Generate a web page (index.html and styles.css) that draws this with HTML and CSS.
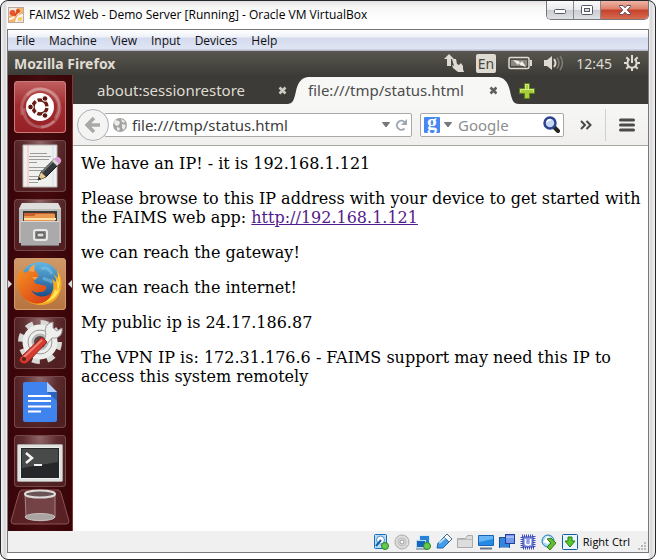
FILE: index.html
```html
<!DOCTYPE html>
<html lang="en">
<head>
<meta charset="utf-8">
<title>FAIMS2 Web - Demo Server [Running] - Oracle VM VirtualBox</title>
<link rel="stylesheet" href="styles.css">
</head>
<body>
<div class="window">
  <header class="titlebar">
    <svg class="app-icon" width="16" height="16" viewBox="0 0 16 16">
      <rect x=".5" y=".5" width="15" height="15" fill="#f3e6dc" stroke="#b9a99f"/>
      <path d="M1 9h5l2-3 1-5h6v6l-5 1-3 7H1z" fill="#f7b56c"/>
      <path d="M1 12c3 0 5-1 6-4l4-2M8 15c0-4 3-6 7-7" fill="none" stroke="#fff" stroke-width="1.5"/>
      <circle cx="4.500" cy="6" r="3" fill="#e8562a"/><circle cx="10" cy="4" r="2" fill="#d94b20"/><circle cx="12" cy="12" r="2" fill="#f7ca55"/>
      <path d="M6 9l4-4" stroke="#d94b20" stroke-width="2"/>
    </svg>
    <h1 class="title">FAIMS2 Web - Demo Server [Running] - Oracle VM VirtualBox</h1>
    <div class="caption-buttons">
      <button class="caption minimize" aria-label="Minimize"><svg width="14" height="12" viewBox="0 0 14 12"><rect x="1.500" y="5.500" width="11" height="4" rx="1" fill="#fff" stroke="#55586a"/></svg></button>
      <button class="caption maximize" aria-label="Maximize"><svg width="14" height="12" viewBox="0 0 14 12"><rect x="1.500" y="1.500" width="11" height="9" rx="1" fill="#fff" stroke="#55586a"/><rect x="4.500" y="4.500" width="5" height="3" fill="#ddd" stroke="#55586a"/></svg></button>
      <button class="caption close" aria-label="Close"><svg width="14" height="12" viewBox="0 0 14 12"><path d="M1.500 1.500h3.500l2 2.300 2-2.300h3.500v1L9.300 6l3.200 3.500v1H9L7 8.200l-2 2.300H1.500v-1L4.700 6 1.500 2.500z" fill="#fff" stroke="#5e4a58"/></svg></button>
    </div>
  </header>

  <div class="client">
    <nav class="menubar">
      <button>File</button><button>Machine</button><button>View</button><button>Input</button><button>Devices</button><button>Help</button>
    </nav>

    <div class="guest">
      <header class="panel">
        <span class="panel-title">Mozilla Firefox</span>
        <div class="indicators">
          <svg width="20" height="18" viewBox="0 0 20 18"><path d="M5 0l5 5H7v7H3V5H0z" fill="#dfdbd2"/><path d="M8 5h4l1 5 2 1 2-2 2 3v3l1 3h-6l-5-4-1-3 2 1z" fill="#dfdbd2"/></svg>
          <span class="language">En</span>
          <svg width="24" height="14" viewBox="0 0 24 14"><rect x="1" y="1.500" width="20" height="11" rx="1.500" fill="none" stroke="#dfdbd2" stroke-width="1.500"/><rect x="3" y="4" width="16" height="6" fill="#8b8882"/><path d="M22 4h2v6h-2z" fill="#dfdbd2"/><path d="M5 4l6 1 1 2 2-2 4 6-6-2-1-2-1 2z" fill="#f2efe8"/></svg>
          <svg width="20" height="16" viewBox="0 0 20 16"><path d="M0 5h3l5-4v14l-5-4H0z" fill="#dfdbd2"/><path d="M10 4q3 4 0 8" fill="none" stroke="#dfdbd2" stroke-width="2"/><path d="M13 2.500q4 5.500 0 11M16 1q5 7 0 14" fill="none" stroke="#807d77" stroke-width="1.500"/></svg>
          <time class="clock">12:45</time>
          <svg width="16" height="16" viewBox="0 0 16 16"><g fill="none" stroke="#dfdbd2" stroke-width="2"><path d="M5.500 4.200a4.600 4.600 0 1 0 5 0M8 0v8"/><path d="M0 8h3M13 8h3M8 13v3M2.300 2.300l2.200 2.200M13.700 2.300l-2.200 2.200M2.300 13.700l2.200-2.200M13.700 13.700l-2.200-2.200"/></g></svg>
        </div>
      </header>

      <div class="desktop">
        <nav class="launcher">
          <button class="tile dash" aria-label="Dash"><svg width="52" height="52" viewBox="0 0 52 52"><g fill="none" stroke="#fff" stroke-opacity=".22" stroke-width="3"><path d="M8 34C5 15 20 2 36 11c11 7 10 19 5 26"/><path d="M13 14c14-12 32-4 33 12 0 13-10 20-19 20"/><path d="M40 40C27 53 8 43 10 27"/></g><circle cx="26" cy="26" r="14" fill="#fff"/><circle cx="26" cy="26" r="7" fill="none" stroke="#6b1d15" stroke-width="3.500" stroke-dasharray="12.660 2" stroke-dashoffset="-1"/><g fill="#5b160f" stroke="#fff"><circle cx="16.500" cy="26" r="2.800"/><circle cx="31" cy="17.500" r="2.800"/><circle cx="31" cy="34.500" r="2.800"/></g></svg></button>
          <button class="tile" aria-label="Text Editor"><svg width="52" height="52" viewBox="0 0 52 52"><path d="M9 5h34v42H9z" fill="#f0f1ef" stroke="#b7b4b0"/><path d="M14 5v42" stroke="#f4b8b8"/><path d="M39 5v42" stroke="#cfdcef"/><path d="M16 13.500h17M15 16.500h22M15 19.500h20M15 22.500h8M15 27.500h21M15 30.500h17M15 36.500h16M15 39.500h12M15 42.500h9" stroke="#9b9b98"/><path d="M24 40l3-8 13-13 5 5-13 13z" fill="#34383a" stroke="#191b1c"/><path d="M28 32l13-13" stroke="#757b7c" stroke-width="2"/><path d="M24 40l3-8 5 5z" fill="#e9c88d"/><path d="M24 40l1-3 2 2z" fill="#111"/><path d="M38 21l3-3 5 5-3 3z" fill="#d6d6d6"/><path d="M41 18q3-2 5 0t1 4l-2 2-5-5z" fill="#dd9bd4"/></svg></button>
          <button class="tile" aria-label="Files"><svg width="52" height="52" viewBox="0 0 52 52"><path d="M8 4h36l3 6v34H5V10z" fill="#bdbdbb"/><path d="M8 4h36l3 6H5z" fill="#dededc"/><path d="M9 12h34v10H9z" fill="#3e3a37"/><path d="M10 14h30v8H10z" fill="#c8612d"/><path d="M10 17h10l2-2h19v7H10z" fill="#e9974e"/><path d="M10 19h32v2H10z" fill="#ffe1a8"/><path d="M7 22h38v25H7z" fill="#aaa"/><path d="M7 22.500h38" stroke="#d7d7d5"/><path d="M7 46.500h38" stroke="#777"/><rect x="20" y="31" width="13" height="10" rx="2" fill="#888" stroke="#e8e8e5" stroke-width="2"/><path d="M23 34h7v4h-7z" fill="#ddd" stroke="#454545"/></svg></button>
          <button class="tile firefox" aria-label="Firefox"><svg width="52" height="52" viewBox="0 0 52 52"><defs><linearGradient id="sea" x2="0" y2="1"><stop stop-color="#62b7e3"/><stop offset="1" stop-color="#103d7c"/></linearGradient><linearGradient id="fox" x2="1" y2="1"><stop stop-color="#f39224"/><stop offset=".6" stop-color="#e35a18"/><stop offset="1" stop-color="#d2361a"/></linearGradient></defs><circle cx="26" cy="24" r="20" fill="url(#sea)"/><path d="M27 11c5-3 9 1 11 5M29 20c4 3 6 0 9 5" stroke="#83cdec" stroke-width="3" fill="none" opacity=".5"/><path d="M43 12c7 9 6 22-2 30-9 8-24 6-31-2 13 5 26 1 29-8 1-5 0-10-2-12l5 4c1-2-1-5-3-8l5 4z" fill="#f5a923"/><path d="M44 16c3 5 2 13-1 18l3-4c-2 9-10 14-19 15 8-2 13-8 14-14l2 2c1-5 0-8-1-12l3 4z" fill="#ffe654"/><path d="M7 11l4 4c4-3 8-4 11-2l3 5-5 3c0 3 1 5 4 5l8 2c1 4-2 6-6 6-4 1-6 0-9-2 4 7 12 9 21 3-3 9-12 13-22 9C6 40 2 30 3 21c0-4 2-7 4-10z" fill="url(#fox)"/><path d="M15 13c0-3 3-5 6-7l-1 8zM18 19l6 0-3 3z" fill="#f7a24a"/></svg></button>
          <button class="tile" aria-label="System Settings"><svg width="52" height="52" viewBox="0 0 52 52"><circle cx="26" cy="25" r="18.500" fill="none" stroke="#d9d9d7" stroke-width="7" stroke-dasharray="7.300 7.230"/><circle cx="26" cy="25" r="13" fill="#b8b8b6" stroke="#eeeeec" stroke-width="9"/><circle cx="26" cy="25" r="12" fill="none" stroke="#989896"/><circle cx="26" cy="25" r="6" fill="#594747"/><path d="M31 25c0-4 0-6 1-8-2-5 0-11 7-12v6l4 3 5-3c1 7-4 11-10 10l-5 6z" fill="#eeefed" stroke="#999"/><path d="M7 40l21-20 5 5-19 20c-5 4-11-1-7-5z" fill="#d53b31" stroke="#971e1a"/><path d="M10 40l18-17" stroke="#ef8175" stroke-width="2"/><circle cx="10" cy="42" r="2" fill="#52201d"/></svg></button>
          <button class="tile" aria-label="Documents"><svg width="52" height="52" viewBox="0 0 52 52"><path d="M11 6h22l10 10v28q0 2-2 2H11q-2 0-2-2V8q0-2 2-2z" fill="#3f83ef"/><path d="M33 16h10v9z" fill="#2d63bd"/><path d="M33 6l10 10H33z" fill="#b8d1fa"/><path d="M14 20h23M14 25h23M14 30.500h23M14 35.500h13" stroke="#fff" stroke-width="2"/></svg></button>
          <button class="tile" aria-label="Terminal"><svg width="52" height="52" viewBox="0 0 52 52"><rect x="3.500" y="9.500" width="45" height="37" rx="1" fill="#dfdfdd" stroke="#a6a6a4"/><path d="M6 12h40v32H6z" fill="#ececea"/><path d="M7 13h38v30H7z" fill="#252728"/><path d="M8 14h36v13L8 33z" fill="#484a49"/><path d="M12 18l6 5-6 5" fill="none" stroke="#f4f4f2" stroke-width="2.500"/><path d="M20 30h8" stroke="#f4f4f2" stroke-width="2"/></svg></button>
          <button class="trash" aria-label="Trash"><svg width="60" height="36" viewBox="0 0 60 36"><path d="M12 1h36q2 0 3 3l8 28q0 3-3 3H4q-3 0-3-3L9 4q1-3 3-3z" fill="#783c40" fill-opacity=".5" stroke="#8b5255"/><path d="M15 4l1 24c5 5 25 5 29 0V4z" fill="#a08082" fill-opacity=".35" stroke="#a18587"/><ellipse cx="30" cy="5" rx="15" ry="3.500" fill="#6a5556" stroke="#dedbd9" stroke-width="2"/><ellipse cx="30" cy="28" rx="15" ry="3.500" fill="#aaa3a1" stroke="#c6bfbd"/></svg></button>
        </nav>

        <main class="browser">
          <div class="tabs">
            <div class="tab"><span>about:sessionrestore</span><button class="tab-close" aria-label="Close tab"><svg width="9" height="9" viewBox="0 0 9 9"><path d="M1.500 1.500l6 6M7.500 1.500l-6 6" stroke="#d0ccc4" stroke-width="2.600"/></svg></button></div>
            <div class="tab active">
              <svg class="edge" width="22" height="27" viewBox="0 0 22 27"><path d="M0 27c6 0 7-4 9-13S15 0 22 0v27z" fill="#f7f7f6"/></svg>
              <div class="tab-body"><span>file:///tmp/status.html</span><button class="tab-close" aria-label="Close tab"><svg width="9" height="9" viewBox="0 0 9 9"><path d="M1.500 1.500l6 6M7.500 1.500l-6 6" stroke="#605e5a" stroke-width="2.600"/></svg></button></div>
              <svg class="edge" width="22" height="27" viewBox="0 0 22 27"><path d="M22 27c-6 0-7-4-9-13S7 0 0 0v27z" fill="#f7f7f6"/></svg>
            </div>
            <button class="new-tab" aria-label="New tab"><svg width="16" height="16" viewBox="0 0 16 16"><path d="M5.500.5h5v5h5v5h-5v5h-5v-5h-5v-5h5z" fill="#a9cc39" stroke="#5d7f1c"/><path d="M6.500 7V1.500h3V7M1.500 9V6.500h13V9" fill="none" stroke="#d4e98a"/></svg></button>
          </div>
          <div class="toolbar">
            <button class="back" aria-label="Back"><svg width="16" height="16" viewBox="0 0 16 16"><path d="M9 1L2 8l7 7M3 8h12" fill="none" stroke="#a9a9a7" stroke-width="3.500"/></svg></button>
            <div class="field address">
              <svg width="14" height="14" viewBox="0 0 14 14"><circle cx="7" cy="7" r="7" fill="#a3a3a1"/><path d="M2 2l4 1 1 2-2 3-3-1-1-2zM8 1l4 2-1 2-2-1zM9 6l4 1-2 5-2-2zM4 9l3 1-1 3-2-1z" fill="#ececea"/></svg>
              <input type="text" aria-label="Address" value="file:///tmp/status.html">
              <svg width="8" height="6" viewBox="0 0 8 6"><path d="M.5.500h7L4 5z" fill="#777" stroke="#777"/></svg>
              <button class="reload" aria-label="Reload"><svg width="12" height="12" viewBox="0 0 12 12"><path d="M9.500 9.500a4.500 4.500 0 1 1 0-6.500" fill="none" stroke="#9fa8b2" stroke-width="2"/><path d="M12 0v6H6z" fill="#9fa8b2"/></svg></button>
            </div>
            <div class="field search">
              <span class="engine">g</span>
              <svg width="8" height="6" viewBox="0 0 8 6"><path d="M.5.500h7L4 5z" fill="#777" stroke="#777"/></svg>
              <input type="text" aria-label="Search" placeholder="Google">
              <button class="go" aria-label="Search"><svg width="17" height="17" viewBox="0 0 17 17"><path d="M11 11l4 4" stroke="#242424" stroke-width="4" stroke-linecap="round"/><circle cx="7" cy="7" r="5.500" fill="#c6d6f5" stroke="#2b428f" stroke-width="2.500"/><path d="M4 6q1-3 4-2" stroke="#fff" stroke-width="1.500" fill="none"/></svg></button>
            </div>
            <button class="overflow" aria-label="More tools"><svg width="12" height="10" viewBox="0 0 12 10"><path d="M1 1l4 4-4 4M6.500 1l4 4-4 4" fill="none" stroke="#474744" stroke-width="2"/></svg></button>
            <button class="menu" aria-label="Open menu"><svg width="16" height="14" viewBox="0 0 16 14"><path d="M1.500 2h13M1.500 7h13M1.500 12h13" stroke="#4b4b48" stroke-width="3" stroke-linecap="round"/></svg></button>
          </div>
          <article class="page">
            <p>We have an IP! - it is 192.168.1.121</p>
            <p>Please browse to this IP address with your device to get started with the FAIMS web app: <a href="http://192.168.1.121">http://192.168.1.121</a></p>
            <p>we can reach the gateway!</p>
            <p>we can reach the internet!</p>
            <p>My public ip is 24.17.186.87</p>
            <p>The VPN IP is: 172.31.176.6 - FAIMS support may need this IP to access this system remotely</p>
          </article>
        </main>
      </div>
    </div>

    <footer class="statusbar">
      <svg viewBox="0 0 16 16"><rect x="1.500" y=".5" width="12" height="14" rx="1" fill="#b9dcf8" stroke="#176fc0"/><circle cx="7.500" cy="6" r="4" fill="#fff" stroke="#4a8fcb"/><path d="M3 12l5-6" stroke="#1762a8" stroke-width="2"/><circle cx="12" cy="12" r="3.500" fill="#65c850" stroke="#25861f"/></svg>
      <svg viewBox="0 0 16 16"><circle cx="8" cy="8" r="7" fill="#ddd" stroke="#aaa"/><circle cx="8" cy="8" r="4" fill="none" stroke="#bbb"/><circle cx="8" cy="8" r="2" fill="#fff" stroke="#999"/></svg>
      <svg viewBox="0 0 16 16"><rect x="4.500" y="1.500" width="10" height="8" fill="#2584d5" stroke="#dbe9f6"/><path d="M4 11h11" stroke="#687f9a"/><rect x="1.500" y="6.500" width="9" height="7" fill="#1468bc" stroke="#bdd6eb"/><path d="M1 15h10" stroke="#596c85"/><circle cx="12" cy="12" r="3.500" fill="#65c850" stroke="#25861f"/></svg>
      <svg viewBox="0 0 16 16"><path d="M1 14l1-5 6-6 5 5-6 6z" fill="#459ce4" stroke="#1667ad"/><path d="M8 3l3-3 5 5-3 3z" fill="#f3f8fc" stroke="#466987"/><path d="M3 9l6-5" stroke="#b4ddfb" stroke-width="2"/></svg>
      <svg viewBox="0 0 16 16"><path d="M.5 4.500h8l2-3h5v12H.5z" fill="#ddd" stroke="#aaa"/><path d="M1 5.500h14" stroke="#bbb"/></svg>
      <svg viewBox="0 0 16 16"><rect x=".5" y="1.500" width="15" height="10" fill="#238be5" stroke="#d9e9f7"/><path d="M1 2h14v3L1 8z" fill="#67b6f3"/><path d="M.5 1.500h15v10H.5z" fill="none" stroke="#1764b7"/><path d="M2 14.500h12" stroke="#64768c" stroke-width="2"/></svg>
      <svg viewBox="0 0 16 16"><rect x=".5" y="3.500" width="10" height="10" fill="#2f86db" stroke="#184da0"/><path d="M1 14h9" stroke="#fff"/><rect x="6.500" y=".5" width="9" height="9" fill="#759aeb" stroke="#273da0"/><path d="M7 3h8" stroke="#cbd8fa"/></svg>
      <svg viewBox="0 0 16 16"><rect x="2" y="2" width="12" height="12" fill="#eef" stroke="#4551bd" stroke-width="3" stroke-dasharray="1 1"/><rect x="3" y="3" width="10" height="10" fill="#8d9ae6" stroke="#3443a5"/><path d="M5.500 5v4q0 2 2.500 2t2.500-2V5" stroke="#fff" stroke-width="1.500" fill="none"/></svg>
      <svg viewBox="0 0 16 16"><circle cx="7" cy="7" r="6" fill="#a9daf2" stroke="#237cba"/><path d="M2 8l4-6 5 2-4 6z" fill="#fff"/><path d="M6 5l4 4-4 4 3 3 6-7-5-5z" fill="#66bd31" stroke="#327d1d"/></svg>
      <svg viewBox="0 0 16 16"><rect x=".5" y=".5" width="15" height="15" rx="1" fill="#e9f6ff" stroke="#155c9b"/><path d="M6 3h4v4h3l-5 6-5-6h3z" fill="#59ca27" stroke="#287b13"/></svg>
      <span class="host-key">Right Ctrl</span>
      <svg class="grip" viewBox="0 0 10 10"><path d="M7 1h2v2H7zM4 4h2v2H4zM7 4h2v2H7zM1 7h2v2H1zM4 7h2v2H4zM7 7h2v2H7z" fill="#b9b9b9"/></svg>
    </footer>
  </div>
</div>
</body>
</html>
```
FILE: styles.css
```css
* { box-sizing: border-box; }
body { margin: 0; background: #fff; }
button, input { font: inherit; color: inherit; border: 0; padding: 0; margin: 0; background: none; }
button { display: flex; align-items: center; justify-content: center; }
svg { display: block; flex: none; }

.window {
  min-height: 100vh;
  display: flex;
  flex-direction: column;
  padding: 0 6px 6px;
  border: 1px solid #24272b;
  border-radius: 8px;
  background: linear-gradient(90deg, #f4f2f3, #d8d5d6 4px, #fff 7px, #fdfdfd calc(100% - 7px), #d8d5d6 calc(100% - 4px), #f4f2f3);
}
.titlebar {
  display: flex;
  align-items: center;
  height: 28px;
  gap: 5px;
  background: linear-gradient(#e3e1e2, #f8f7f7 6px, #fff 20px);
}
.app-icon { margin-left: 1px; }
.title { flex: 1; margin: 0; font: 12px/16px "Open Sans", sans-serif; color: #000; }
.caption-buttons { align-self: flex-start; display: flex; height: 19px; border: 1px solid #74777e; border-top: 0; border-radius: 0 0 5px 5px; overflow: hidden; }
.caption { width: 27px; background: linear-gradient(#fafafa, #e9e9eb 48%, #c9cbd0 50%, #dfe1e5); border-right: 1px solid #85888f; }
.caption.close { width: 47px; border-right: 0; background: linear-gradient(#eeb5a6, #dc8069 45%, #c5402b 50%, #d86c50); }

.client { flex: 1; display: flex; flex-direction: column; border: 1px solid #77787a; }
.menubar {
  display: flex;
  gap: 14px;
  height: 21px;
  padding: 0 8px;
  font: 12px/20px "Open Sans", sans-serif;
  color: #111;
  background: linear-gradient(#fff, #eef1f8 7px, #d5dbee 8px, #e0e5f4 19px, #b6bccc 20px);
}

.guest { flex: 1; display: flex; flex-direction: column; font-family: "Noto Sans", sans-serif; }
.panel { height: 24px; padding: 0 8px 0 6px; display: flex; align-items: center; justify-content: space-between; color: #dfdbd2; background: linear-gradient(#58564e, #3d3c37); }
.panel-title { font-size: 14px; font-weight: 700; }
.indicators { display: flex; align-items: center; gap: 12px; }
.language { padding: 0 2px; border-radius: 2px; background: #dfdbd2; color: #474640; font-size: 14px; line-height: 19px; }
.clock { font-size: 14px; }

.desktop { flex: 1; display: flex; }
.launcher { flex: none; display: flex; flex-direction: column; align-items: center; gap: 7px; width: 65px; padding: 6px 6px 0; border-right: 1px solid #8c3330; background: linear-gradient(90deg, #380508, #450b0e 50%, #380508); }
.tile { position: relative; width: 52px; height: 52px; border-radius: 4px; background: radial-gradient(ellipse at 50% 0, #91686a, #5e2d30 45%, #4f1f22 75%); box-shadow: inset 0 0 0 1px #76474a; }
.dash { background: linear-gradient(#c06060, #a22d30 45%, #952025); box-shadow: inset 0 0 0 1px #c97a79; }
.firefox { background: linear-gradient(#d09a68, #b5733f); box-shadow: inset 0 0 0 1px #cf9a6c; }
.firefox::before, .firefox::after { content: ""; position: absolute; top: 22px; border: 4px solid transparent; }
.firefox::before { left: -6px; border-left-color: #ddd; border-right: 0; }
.firefox::after { right: -6px; border-right-color: #ddd; border-left: 0; }
.trash { margin-top: -5px; }

.browser { flex: 1; min-width: 0; display: flex; flex-direction: column; background: #fff; }
.tabs { display: flex; align-items: flex-end; height: 29px; background: #3c3b37; font-size: 15px; line-height: 27px; }
.tab { display: flex; flex: 0 1 214px; align-items: center; justify-content: space-between; padding-left: 24px; color: #dfdbd2; white-space: nowrap; }
.tab.active { flex: 0 1 232px; padding: 0; color: #4c4c4c; }
.tab-body { flex: 1; min-width: 0; display: flex; align-items: center; justify-content: space-between; height: 27px; margin: 0 -1px; background: #f7f7f6; }
.new-tab { height: 27px; }
.toolbar { display: flex; align-items: center; height: 42px; padding: 0 13px 0 4px; border-bottom: 1px solid #aaa7a2; background: linear-gradient(#f7f7f6, #f0efed); color: #3c3c3c; }
.back { position: relative; z-index: 1; width: 32px; height: 32px; border: 1px solid #aab0ba; border-radius: 50%; background: #f4f4f3; }
.field { display: flex; align-items: center; height: 24px; border: 1px solid #aaa9a6; border-radius: 2px; background: #fff; font-size: 15px; }
.field input { flex: 1; min-width: 0; width: 0; height: 22px; outline: 0; }
.field input::placeholder { color: #8e8e8e; opacity: 1; }
.address { flex: 1; gap: 5px; margin: 0 8px 0 -5px; padding: 0 4px 0 8px; }
.search { flex: 0 1 144px; gap: 6px; padding: 0 3px; }
.search svg { margin-left: -2px; }
.engine { width: 16px; height: 16px; border-radius: 1px; background: #4787f3; color: #fff; font: 700 20px/10px "Liberation Serif", serif; text-align: center; }
.overflow { height: 32px; padding: 0 13px 0 16px; border-right: 1px solid #cdd1d7; }
.menu { padding-left: 13px; }

.page { flex: 1; padding: 8px 4px 8px 8px; font: 16px/19px "DejaVu Serif", serif; color: #000; }
.page p { margin: 0 0 16px; }
.page a { color: #551a8b; }

.statusbar { display: flex; justify-content: flex-end; align-items: center; gap: 5px; height: 21px; background: #f0f0f0; }
.statusbar svg { width: 16px; height: 16px; }
.host-key { font: 11px/16px "Open Sans", sans-serif; color: #000; }
.statusbar .grip { width: 10px; height: 10px; margin: 8px 1px 0 2px; }
```
